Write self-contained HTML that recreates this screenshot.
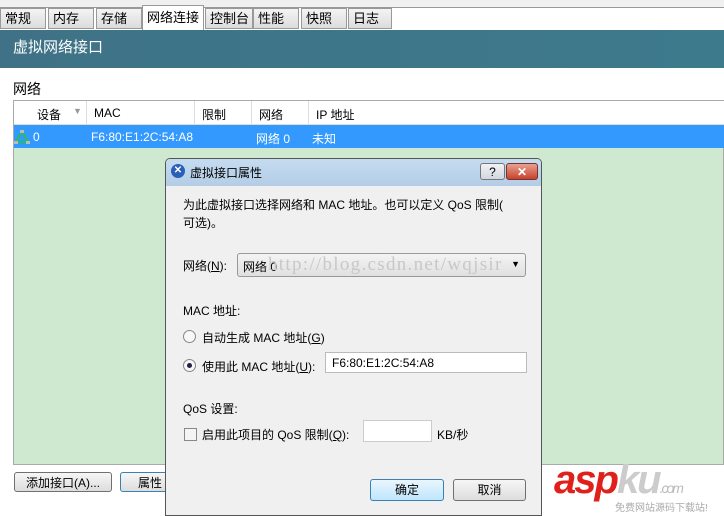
<html><head><style>
body{margin:0;width:724px;height:516px;overflow:hidden;background:#fff;font-family:"Liberation Sans","Noto Sans CJK SC",sans-serif;font-size:12px;position:relative;color:#000}
.a{position:absolute}
.tab{position:absolute;top:8px;height:21px;background:linear-gradient(#f4f4f4,#dcdcdc);border:1px solid #999;box-sizing:border-box;font-size:13px;line-height:20px;padding-left:4px}
.btn{position:absolute;background:linear-gradient(#f6f6f6,#dddddd);border:1px solid #707070;border-radius:3px;box-sizing:border-box;text-align:center;line-height:20px;font-size:12px}
</style></head><body>
<div class="a" style="left:0;top:0;width:724px;height:7px;background:#f0f0f0;border-bottom:1px solid #999"></div>
<div class="tab" style="left:0;width:46px">常规</div>
<div class="tab" style="left:48px;width:46px">内存</div>
<div class="tab" style="left:96px;width:46px">存储</div>
<div class="tab" style="left:142px;top:5px;height:26px;width:62px;background:#fff;border-bottom:none;line-height:24px">网络连接</div>
<div class="tab" style="left:205px;width:48px">控制台</div>
<div class="tab" style="left:253px;width:46px">性能</div>
<div class="tab" style="left:301px;width:46px">快照</div>
<div class="tab" style="left:348px;width:44px">日志</div>
<div class="a" style="left:0;top:30px;width:724px;height:38px;background:linear-gradient(90deg,#3f7286,#3d7a8c);color:#fff;font-size:15px;line-height:36px;padding-left:13px;box-sizing:border-box">虚拟网络接口</div>
<div class="a" style="left:13px;top:79px;font-size:14px">网络</div>
<div class="a" style="left:13px;top:100px;width:711px;height:365px;background:#cfe8d0;border:1px solid #aaa;box-sizing:border-box"></div>
<div class="a" style="left:14px;top:101px;width:710px;height:23px;background:#fff;border-bottom:1px solid #ddd"></div>
<div class="a" style="left:37px;top:106px">设备</div><div class="a" style="left:73px;top:106px;color:#999;font-size:9px">▼</div>
<div class="a" style="left:86px;top:101px;width:1px;height:23px;background:#ddd"></div>
<div class="a" style="left:94px;top:106px">MAC</div>
<div class="a" style="left:194px;top:101px;width:1px;height:23px;background:#ddd"></div>
<div class="a" style="left:202px;top:106px">限制</div>
<div class="a" style="left:251px;top:101px;width:1px;height:23px;background:#ddd"></div>
<div class="a" style="left:259px;top:106px">网络</div>
<div class="a" style="left:308px;top:101px;width:1px;height:23px;background:#ddd"></div>
<div class="a" style="left:316px;top:106px">IP 地址</div>
<div class="a" style="left:14px;top:125px;width:710px;height:23px;background:#3399ff;color:#fff"></div>
<svg class="a" style="left:14px;top:129px" width="16" height="16"><path d="M8 2L2 13H14Z" fill="none" stroke="#2c2" stroke-width="1.5"/><rect x="6" y="1" width="4" height="3" fill="#bbb"/><rect x="0" y="12" width="4" height="3" fill="#bbb"/><rect x="12" y="12" width="4" height="3" fill="#bbb"/></svg>
<div class="a" style="left:33px;top:130px;color:#fff">0</div>
<div class="a" style="left:91px;top:130px;color:#fff">F6:80:E1:2C:54:A8</div>
<div class="a" style="left:256px;top:130px;color:#fff">网络 0</div>
<div class="a" style="left:312px;top:130px;color:#fff">未知</div>
<div class="btn" style="left:14px;top:472px;width:98px;height:20px">添加接口(A)...</div>
<div class="btn" style="left:120px;top:472px;width:60px;height:20px;border-color:#3c7fb1">属性</div>
<!-- dialog -->
<div class="a" style="left:165px;top:158px;width:377px;height:358px;background:#f0f0f0;border:1px solid #555;border-radius:5px 5px 0 0;box-sizing:border-box;overflow:hidden">
<div class="a" style="left:0;top:0;width:377px;height:27px;background:linear-gradient(#c5dcf0,#b4cde6)"></div>
<div class="a" style="left:5px;top:5px;width:14px;height:14px;border-radius:50%;background:#2a5fb8;color:#fff;font-size:10px;text-align:center;line-height:14px;font-weight:bold">✕</div>
<div class="a" style="left:24px;top:5px;font-size:12px">虚拟接口属性</div>
<div class="a" style="left:314px;top:4px;width:25px;height:17px;border:1px solid #777;border-radius:3px;background:linear-gradient(#f2f2f2,#cfd8e2);text-align:center;line-height:16px;font-size:12px;box-sizing:border-box">?</div>
<div class="a" style="left:340px;top:4px;width:32px;height:17px;border:1px solid #733;border-radius:3px;background:linear-gradient(#e8a090,#c7432c);text-align:center;line-height:16px;color:#fff;font-weight:bold;box-sizing:border-box">✕</div>
<div class="a" style="left:17px;top:37px;width:345px;line-height:18px">为此虚拟接口选择网络和 MAC 地址。也可以定义 QoS 限制(<br>可选)。</div>
<div class="a" style="left:17px;top:98px">网络(<u>N</u>):</div>
<div class="a" style="left:71px;top:94px;width:289px;height:24px;border:1px solid #999;border-radius:3px;background:linear-gradient(#f4f4f4,#e0e0e0);box-sizing:border-box;padding:4px 0 0 5px">网络 0<span style="position:absolute;right:5px;top:5px;font-size:9px">▼</span><span style="position:absolute;left:30px;top:0px;color:#c8c8c8;font-family:'Liberation Serif',serif;font-size:19px;letter-spacing:1.3px">http://blog.csdn.net/wqjsir</span></div>
<div class="a" style="left:17px;top:143px">MAC 地址:</div>
<div class="a" style="left:17px;top:171px;width:11px;height:11px;border:1px solid #888;border-radius:50%;background:#f8f8f8"></div>
<div class="a" style="left:36px;top:170px">自动生成 MAC 地址(<u>G</u>)</div>
<div class="a" style="left:17px;top:200px;width:11px;height:11px;border:1px solid #888;border-radius:50%;background:#f8f8f8"><div style="margin:3px;width:5px;height:5px;border-radius:50%;background:#224"></div></div>
<div class="a" style="left:36px;top:199px">使用此 MAC 地址(<u>U</u>):</div>
<div class="a" style="left:159px;top:193px;width:202px;height:21px;border:1px solid #bbb;background:#fff;box-sizing:border-box;padding:3px 0 0 6px">F6:80:E1:2C:54:A8</div>
<div class="a" style="left:17px;top:241px">QoS 设置:</div>
<div class="a" style="left:18px;top:269px;width:11px;height:11px;border:1px solid #888;background:#f4f4f4"></div>
<div class="a" style="left:36px;top:267px">启用此项目的 QoS 限制(<u>Q</u>):</div>
<div class="a" style="left:197px;top:261px;width:67px;height:20px;border:1px solid #ccc;background:#fff"></div>
<div class="a" style="left:271px;top:267px">KB/秒</div>
<div class="btn" style="left:204px;top:320px;width:74px;height:22px;border-color:#3c7fb1;background:linear-gradient(#eaf6fd,#bee6fd)">确定</div>
<div class="btn" style="left:287px;top:320px;width:73px;height:22px">取消</div>
</div>
<div class="a" style="left:554px;top:458px;font-size:40px;font-weight:bold;font-style:italic;color:#e0201b;letter-spacing:-2px;font-family:'Liberation Sans',sans-serif">asp<span style="color:#ccc">ku</span><span style="font-size:14px;color:#bbb;font-weight:normal">.com</span></div>
<div class="a" style="left:615px;top:499px;font-size:10px;color:#aaa">免费网站源码下载站!</div>
</body></html>
